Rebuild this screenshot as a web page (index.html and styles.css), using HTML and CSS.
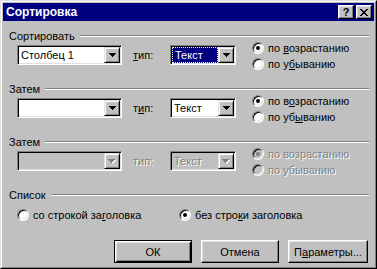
FILE: index.html
```html
<!DOCTYPE html>
<html lang="ru">
<head>
  <meta charset="UTF-8">
  <meta name="viewport" content="width=device-width, initial-scale=1.0">
  <title>Сортировка</title>
  <link rel="stylesheet" href="styles.css">
</head>
<body>
  <div class="window">
    <div class="frame">
      <div class="titlebar">
        <span class="title">Сортировка</span>
        <div class="caption-buttons">
          <button class="cap-btn help" aria-label="Справка">?</button>
          <button class="cap-btn close" aria-label="Закрыть">
            <svg width="8" height="7" viewBox="0 0 8 7" shape-rendering="crispEdges"><path d="M0 0h2v1H0zM6 0h2v1H6zM1 1h2v1H1zM5 1h2v1H5zM2 2h4v1H2zM3 3h2v1H3zM2 4h4v1H2zM1 5h2v1H1zM5 5h2v1H5zM0 6h2v1H0zM6 6h2v1H6z"/></svg>
          </button>
        </div>
      </div>

      <div class="content">
        <!-- Первый ключ -->
        <section class="group">
          <div class="group-title"><span>Сортировать</span></div>
          <div class="group-row">
            <div class="combo wide">
              <span class="combo-text">Столбец 1</span>
              <span class="drop"><svg width="7" height="4" viewBox="0 0 7 4" shape-rendering="crispEdges"><path d="M0 0h7v1H0zM1 1h5v1H1zM2 2h3v1H2zM3 3h1v1H3z"/></svg></span>
            </div>
            <span class="type-label"><u>т</u>ип:</span>
            <div class="combo narrow focused">
              <span class="combo-text"><span class="sel">Текст</span></span>
              <span class="drop"><svg width="7" height="4" viewBox="0 0 7 4" shape-rendering="crispEdges"><path d="M0 0h7v1H0zM1 1h5v1H1zM2 2h3v1H2zM3 3h1v1H3z"/></svg></span>
            </div>
            <div class="radios">
              <label class="radio-line"><span class="radio checked"></span><span>по <u>в</u>озрастанию</span></label>
              <label class="radio-line"><span class="radio"></span><span>по у<u>б</u>ыванию</span></label>
            </div>
          </div>
        </section>

        <!-- Второй ключ -->
        <section class="group">
          <div class="group-title"><span>Затем</span></div>
          <div class="group-row">
            <div class="combo wide">
              <span class="combo-text"></span>
              <span class="drop"><svg width="7" height="4" viewBox="0 0 7 4" shape-rendering="crispEdges"><path d="M0 0h7v1H0zM1 1h5v1H1zM2 2h3v1H2zM3 3h1v1H3z"/></svg></span>
            </div>
            <span class="type-label">т<u>и</u>п:</span>
            <div class="combo narrow">
              <span class="combo-text">Текст</span>
              <span class="drop"><svg width="7" height="4" viewBox="0 0 7 4" shape-rendering="crispEdges"><path d="M0 0h7v1H0zM1 1h5v1H1zM2 2h3v1H2zM3 3h1v1H3z"/></svg></span>
            </div>
            <div class="radios">
              <label class="radio-line"><span class="radio checked"></span><span>по в<u>о</u>зрастанию</span></label>
              <label class="radio-line"><span class="radio"></span><span>по уб<u>ы</u>ванию</span></label>
            </div>
          </div>
        </section>

        <!-- Третий ключ (недоступен) -->
        <section class="group disabled">
          <div class="group-title"><span>Затем</span></div>
          <div class="group-row">
            <div class="combo wide">
              <span class="combo-text"></span>
              <span class="drop"><svg width="8" height="5" viewBox="0 0 8 5" shape-rendering="crispEdges"><path fill="#fff" d="M1 1h7v1H1zM2 2h5v1H2zM3 3h3v1H3zM4 4h1v1H4z"/><path fill="#808080" d="M0 0h7v1H0zM1 1h5v1H1zM2 2h3v1H2zM3 3h1v1H3z"/></svg></span>
            </div>
            <span class="type-label">тип:</span>
            <div class="combo narrow">
              <span class="combo-text">Текст</span>
              <span class="drop"><svg width="8" height="5" viewBox="0 0 8 5" shape-rendering="crispEdges"><path fill="#fff" d="M1 1h7v1H1zM2 2h5v1H2zM3 3h3v1H3zM4 4h1v1H4z"/><path fill="#808080" d="M0 0h7v1H0zM1 1h5v1H1zM2 2h3v1H2zM3 3h1v1H3z"/></svg></span>
            </div>
            <div class="radios">
              <label class="radio-line"><span class="radio checked"></span><span>по возрастанию</span></label>
              <label class="radio-line"><span class="radio"></span><span>по убыванию</span></label>
            </div>
          </div>
        </section>

        <!-- Список -->
        <section class="group list">
          <div class="group-title"><span>Список</span></div>
          <div class="list-row">
            <label class="radio-line first"><span class="radio"></span><span>со строкой за<u>г</u>оловка</span></label>
            <label class="radio-line"><span class="radio checked"></span><span>без стро<u>к</u>и заголовка</span></label>
          </div>
        </section>

        <div class="actions">
          <button class="btn default">ОК</button>
          <button class="btn">Отмена</button>
          <button class="btn wide-btn">П<u>а</u>раметры...</button>
        </div>
      </div>
    </div>
  </div>
</body>
</html>
```

FILE: styles.css
```css
body {
  margin: 0;
  background: #c0c0c0;
  font-family: "Liberation Sans", Arial, sans-serif;
  font-size: 11px;
  color: #000;
}
.window {
  width: 377px;
  height: 269px;
  box-sizing: border-box;
  border: 1px solid;
  border-color: #dfdfdf #000 #000 #dfdfdf;
  background: #c0c0c0;
}
.frame {
  height: 100%;
  box-sizing: border-box;
  border: 1px solid;
  border-color: #fff #808080 #808080 #fff;
  padding: 1px;
  display: flex;
  flex-direction: column;
}
.titlebar {
  height: 18px;
  flex: none;
  background: #000080;
  color: #fff;
  display: flex;
  align-items: center;
  justify-content: space-between;
  padding: 0 2px 0 3px;
}
.title {
  font-weight: bold;
  font-size: 12px;
}
.caption-buttons {
  display: flex;
  gap: 2px;
}
.cap-btn {
  width: 16px;
  height: 14px;
  padding: 0;
  box-sizing: border-box;
  background: #c0c0c0;
  border: 1px solid;
  border-color: #fff #000 #000 #fff;
  box-shadow: inset -1px -1px #808080, inset 1px 1px #dfdfdf;
  display: flex;
  align-items: center;
  justify-content: center;
  font-family: "Liberation Sans", Arial, sans-serif;
  font-weight: bold;
  font-size: 11px;
  line-height: 12px;
  color: #000;
}
.content {
  flex: 1;
  padding: 9px 5px 0 6px;
  display: flex;
  flex-direction: column;
}
.group {
  margin-bottom: 11px;
}
.group-title {
  display: flex;
  align-items: center;
  height: 12px;
  line-height: 12px;
}
.group-title::after {
  content: "";
  flex: 1;
  border-top: 1px solid #808080;
  border-bottom: 1px solid #fff;
  margin-left: 5px;
}
.group-row {
  display: flex;
  align-items: flex-start;
  margin-top: -2px;
  height: 32px;
}
.combo {
  margin-top: 5px;
  height: 20px;
  box-sizing: border-box;
  display: flex;
  background: #fff;
  border: 1px solid;
  border-color: #808080 #fff #fff #808080;
  box-shadow: inset 1px 1px #000, inset -1px -1px #dfdfdf;
  padding: 1px;
}
.combo.wide {
  width: 105px;
  margin-left: 8px;
}
.combo.narrow {
  width: 66px;
}
.combo-text {
  flex: 1;
  line-height: 16px;
  padding-left: 2px;
  white-space: nowrap;
  overflow: hidden;
}
.focused .combo-text {
  padding: 0;
}
.sel {
  display: block;
  height: 16px;
  box-sizing: border-box;
  padding-left: 2px;
  line-height: 14px;
  background: #000080;
  color: #fff;
  border: 1px dotted #ffff9f;
}
.drop {
  width: 16px;
  height: 16px;
  box-sizing: border-box;
  flex: none;
  display: flex;
  align-items: center;
  justify-content: center;
  background: #c0c0c0;
  border: 1px solid;
  border-color: #dfdfdf #000 #000 #dfdfdf;
  box-shadow: inset 1px 1px #fff, inset -1px -1px #808080;
}
.type-label {
  margin: 5px 0 0 11px;
  width: 37px;
  line-height: 20px;
}
.radios {
  margin-left: 16px;
  display: flex;
  flex-direction: column;
}
.radio-line {
  height: 16px;
  display: flex;
  align-items: center;
  gap: 4px;
  white-space: nowrap;
}
.radio {
  position: relative;
  flex: none;
  width: 12px;
  height: 12px;
  box-sizing: border-box;
  border-radius: 50%;
  background: #fff;
  border: 1px solid;
  border-color: #808080 #fff #fff #808080;
  box-shadow: inset 1px 1px #000, inset -1px -1px #dfdfdf;
}
.radio.checked::after {
  content: "";
  position: absolute;
  left: 3px;
  top: 3px;
  width: 4px;
  height: 4px;
  border-radius: 50%;
  background: #000;
}
.disabled .type-label,
.disabled .combo-text,
.disabled .radio-line {
  color: #808080;
  text-shadow: 1px 1px 0 #fff;
}
.disabled .combo {
  background: #c0c0c0;
}
.disabled .radio {
  background: #c0c0c0;
}
.disabled .radio.checked::after {
  background: #808080;
}
.list-row {
  display: flex;
  margin-top: 6px;
}
.list-row .first {
  width: 162px;
  margin-left: 8px;
}
.group.list {
  margin-bottom: 0;
}
.actions {
  display: flex;
  justify-content: flex-end;
  gap: 9px;
  margin-top: 17px;
  padding-right: 1px;
}
.btn {
  width: 78px;
  height: 23px;
  padding: 0;
  box-sizing: border-box;
  background: #c0c0c0;
  border: 1px solid;
  border-color: #fff #000 #000 #fff;
  box-shadow: inset -1px -1px #808080, inset 1px 1px #dfdfdf;
  font-family: "Liberation Sans", Arial, sans-serif;
  font-size: 11px;
  color: #000;
}
.btn.default {
  border-color: #000;
  box-shadow: inset 1px 1px #fff, inset -1px -1px #000, inset 2px 2px #dfdfdf, inset -2px -2px #808080;
}
.btn.wide-btn {
  width: 80px;
}
```
